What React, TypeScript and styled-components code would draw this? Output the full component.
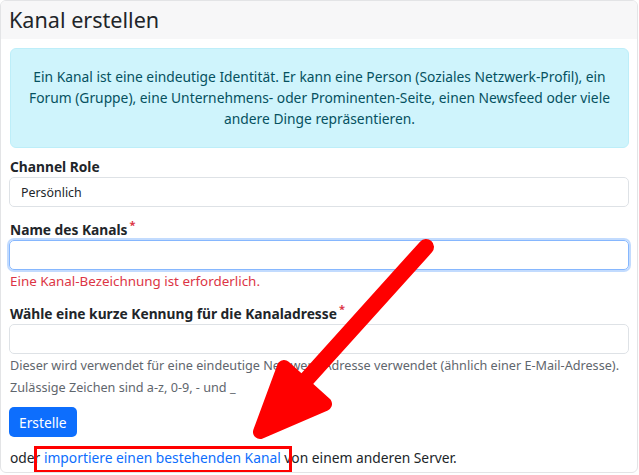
import styled, { createGlobalStyle } from "styled-components";

const GlobalStyle = createGlobalStyle`
  html, body {
    margin: 0;
    padding: 0;
    background: #fff;
  }
  body {
    font-family: "Noto Sans", "Open Sans", sans-serif;
    color: #212529;
    font-size: 13.8px;
  }
`;

function App() {
  return (
    <>
      <GlobalStyle />
      <Card>
        <Header>
          <Title>Kanal erstellen</Title>
        </Header>
        <Body>
          <Alert>
            Ein Kanal ist eine eindeutige Identität. Er kann eine Person (Soziales Netzwerk-Profil), ein
            Forum (Gruppe), eine Unternehmens- oder Prominenten-Seite, einen Newsfeed oder viele andere
            Dinge repräsentieren.
          </Alert>

          <Field>
            <Label>Channel Role</Label>
            <Select>Persönlich</Select>
          </Field>

          <Field>
            <Label>
              Name des Kanals<Required>*</Required>
            </Label>
            <Input $focused />
            <ErrorText>Eine Kanal-Bezeichnung ist erforderlich.</ErrorText>
          </Field>

          <Field>
            <Label>
              Wähle eine kurze Kennung für die Kanaladresse<Required>*</Required>
            </Label>
            <Input />
            <Help>
              Dieser wird verwendet für eine eindeutige Netzwerk-Adresse verwendet (ähnlich einer
              E-Mail-Adresse).
            </Help>
            <Help>Zulässige Zeichen sind a-z, 0-9, - und _</Help>
          </Field>

          <Button>Erstelle</Button>

          <Footer>
            oder <Link href="#">importiere einen bestehenden Kanal</Link> von einem anderen Server.
          </Footer>
        </Body>

        <Highlight />
        <Arrow viewBox="0 0 639 475" width="639" height="475">
          <line x1="426" y1="247" x2="288" y2="400" stroke="#ff0000" strokeWidth="16" strokeLinecap="round" />
          <polygon
            points="284,367 260,432 325,404"
            fill="#ff0000"
            stroke="#ff0000"
            strokeWidth="14"
            strokeLinejoin="round"
          />
        </Arrow>
      </Card>
    </>
  );
}

const Card = styled.div`
  position: relative;
  box-sizing: border-box;
  width: 638px;
  height: 473px;
  border: 1px solid #e3e4e6;
  border-radius: 6px;
  overflow: hidden;
  background: #fff;
`;

const Header = styled.div`
  height: 38px;
  display: flex;
  align-items: center;
  padding: 0 8px;
  background: #f7f7f8;
`;

const Title = styled.h2`
  margin: 0;
  font-size: 21.6px;
  font-weight: 400;
  color: #212529;
  line-height: 1;
`;

const Body = styled.div`
  padding: 9px 8px 0 8px;
`;

const Alert = styled.div`
  background: #cff4fc;
  border: 1px solid #bdeef9;
  border-radius: 6px;
  color: #055160;
  text-align: center;
  font-size: 13.8px;
  line-height: 21px;
  padding: 17px 16px 18px;
  margin: 0 0 9px 1px;
`;

const Field = styled.div`
  margin-bottom: 13px;
`;

const Label = styled.div`
  font-weight: 700;
  font-size: 13.75px;
  line-height: 20px;
  color: #212529;
  padding-left: 1px;
`;

const Required = styled.sup`
  color: #dc3545;
  font-size: 11px;
  margin-left: 2px;
  vertical-align: 6px;
  line-height: 0;
`;

const Select = styled.div`
  box-sizing: border-box;
  height: 30px;
  display: flex;
  align-items: center;
  padding: 0 11px;
  border: 1px solid #dee2e6;
  border-radius: 5px;
  font-size: 12.4px;
  color: #212529;
`;

const Input = styled.div<{ $focused?: boolean }>`
  box-sizing: border-box;
  height: 30px;
  border: 1px solid ${(p) => (p.$focused ? "#86b7fe" : "#dee2e6")};
  border-radius: 5px;
  box-shadow: ${(p) => (p.$focused ? "0 0 0 2px rgba(13, 110, 253, 0.25)" : "none")};
`;

const ErrorText = styled.div`
  color: #dc3545;
  font-size: 13.4px;
  line-height: 20px;
  margin-top: 1px;
  padding-left: 1px;
`;

const Help = styled.div`
  color: #5f666d;
  font-size: 12.65px;
  line-height: 22px;
  padding-left: 1px;
`;

const Button = styled.button`
  display: block;
  height: 30px;
  padding: 0 10px;
  border: none;
  border-radius: 5px;
  background: #0d6efd;
  color: #fff;
  font-family: inherit;
  font-size: 13.8px;
  margin-top: -4px;
`;

const Footer = styled.div`
  margin-top: 10px;
  font-size: 13.8px;
  line-height: 22px;
  padding-left: 1px;
`;

const Link = styled.a`
  color: #0d6efd;
  text-decoration: none;
`;

const Highlight = styled.div`
  position: absolute;
  left: 33px;
  top: 445px;
  width: 258px;
  height: 27px;
  box-sizing: border-box;
  border: 3px solid #ff0000;
`;

const Arrow = styled.svg`
  position: absolute;
  left: -1px;
  top: -1px;
  pointer-events: none;
`;

export default App;
